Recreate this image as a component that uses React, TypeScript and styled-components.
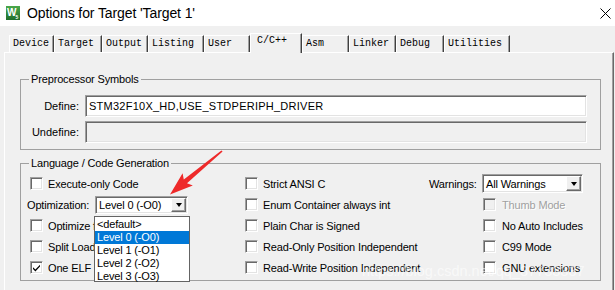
import React from "react";
import styled, { createGlobalStyle } from "styled-components";

const GlobalStyle = createGlobalStyle`
  html, body { margin: 0; padding: 0; background: #f0f0f0; }
  body {
    font-family: "Liberation Sans", Arial, sans-serif;
    font-size: 11px;
    letter-spacing: -0.15px;
    color: #000;
  }
  * { box-sizing: border-box; }
`;

// data
const tabs = [
  { name: "Device", w: 45 },
  { name: "Target", w: 48 },
  { name: "Output", w: 46 },
  { name: "Listing", w: 56 },
  { name: "User", w: 46 },
  { name: "C/C++", w: 52, active: true },
  { name: "Asm", w: 47 },
  { name: "Linker", w: 47 },
  { name: "Debug", w: 48 },
  { name: "Utilities", w: 66 },
];

const levels = ["<default>", "Level 0 (-O0)", "Level 1 (-O1)", "Level 2 (-O2)", "Level 3 (-O3)"];

const CheckMark = () => (
  <svg width="9" height="9" viewBox="0 0 9 9">
    <path d="M1 4.2 L3.4 6.6 L8 1.8 L8 3.6 L3.4 8.4 L1 6 Z" fill="#000" />
  </svg>
);

const Check: React.FC<{ checked?: boolean; disabled?: boolean; label: string; clip?: number }> = ({
  checked,
  disabled,
  label,
  clip,
}) => (
  <>
    <Box $disabled={disabled}>{checked && <CheckMark />}</Box>
    <Label $disabled={disabled} $clip={clip}>
      {label}
    </Label>
  </>
);

const Combo: React.FC<{ value: string; w: number; h: number; children?: React.ReactNode }> = ({
  value,
  w,
  h,
  children,
}) => (
  <ComboBox $w={w} $h={h}>
    <ComboText>{value}</ComboText>
    <ComboButton>
      <Arrow />
    </ComboButton>
    {children}
  </ComboBox>
);

export default function App() {
  return (
    <>
      <GlobalStyle />
      <Window>
        <TitleBar>
          <svg width="14" height="14" viewBox="0 0 14 14">
            <defs>
              <linearGradient id="kg" x1="0" y1="0" x2="0" y2="1">
                <stop offset="0" stopColor="#4aa84a" />
                <stop offset="1" stopColor="#1f6e2c" />
              </linearGradient>
            </defs>
            <rect width="14" height="14" fill="url(#kg)" />
            <text x="1" y="10" fontSize="10" fontWeight="bold" fill="#fff" fontFamily="Liberation Sans">
              W
            </text>
            <text x="9.5" y="13" fontSize="5" fontWeight="bold" fill="#fff" fontFamily="Liberation Sans">
              5
            </text>
          </svg>
          <TitleText>Options for Target 'Target 1'</TitleText>
          <svg width="11" height="11" viewBox="0 0 11 11">
            <path d="M0.5 0.5 L10.5 10.5 M10.5 0.5 L0.5 10.5" stroke="#000" strokeWidth="1" />
          </svg>
        </TitleBar>

        <TabStrip>
          {tabs.map((t) => (
            <Tab key={t.name} $w={t.w} $active={t.active}>
              {t.name}
            </Tab>
          ))}
        </TabStrip>

        <Panel>
          <Group>
            <Legend>Preprocessor Symbols</Legend>
            <SymbolGrid>
              <FieldLabel>Define:</FieldLabel>
              <TextInput>STM32F10X_HD,USE_STDPERIPH_DRIVER</TextInput>
              <FieldLabel>Undefine:</FieldLabel>
              <TextInput $disabled />
            </SymbolGrid>
          </Group>

          <Group $gap>
            <Legend>Language / Code Generation</Legend>
            <Columns>
              <Column $w={218}>
                <Row $indent={3}>
                  <Check label="Execute-only Code" />
                </Row>
                <Row $indent={0} $gap={8}>
                  <OptLabel>Optimization:</OptLabel>
                  <Combo value="Level 0 (-O0)" w={93} h={18}>
                    <DropList>
                      {levels.map((l, i) => (
                        <DropItem key={l} $selected={i === 1}>
                          {l}
                        </DropItem>
                      ))}
                    </DropList>
                  </Combo>
                </Row>
                <Row $indent={3}>
                  <Check label="Optimize for Time" clip={136} />
                </Row>
                <Row $indent={3}>
                  <Check label="Split Load and Store Multiple" clip={136} />
                </Row>
                <Row $indent={3}>
                  <Check checked label="One ELF Section per Function" clip={136} />
                </Row>
              </Column>

              <Column $w={184}>
                <Row>
                  <Check label="Strict ANSI C" />
                </Row>
                <Row>
                  <Check label="Enum Container always int" />
                </Row>
                <Row>
                  <Check label="Plain Char is Signed" />
                </Row>
                <Row>
                  <Check label="Read-Only Position Independent" />
                </Row>
                <Row>
                  <Check label="Read-Write Position Independent" />
                </Row>
              </Column>

              <Column>
                <Row>
                  <WarnLabel>Warnings:</WarnLabel>
                  <Combo value="All Warnings" w={101} h={19} />
                </Row>
                <Row $indent={54} $gap={6}>
                  <Check disabled label="Thumb Mode" />
                </Row>
                <Row $indent={54} $gap={6}>
                  <Check label="No Auto Includes" />
                </Row>
                <Row $indent={54} $gap={6}>
                  <Check label="C99 Mode" />
                </Row>
                <Row $indent={54} $gap={6}>
                  <Check label="GNU extensions" />
                </Row>
              </Column>
            </Columns>
          </Group>
        </Panel>

        <Watermark>https://blog.csdn.net/qq_37733337</Watermark>

        <Annotation width="615" height="290" viewBox="0 0 615 290">
          <polygon
            points="222.6,151.6 187,183.2 192.8,185.6 170,194.5 182.6,173.2 183.8,179.4 221.4,150.4"
            fill="#ee2a2a"
          />
        </Annotation>
      </Window>
    </>
  );
}

const Window = styled.div`
  position: relative;
  width: 615px;
  height: 290px;
  overflow: hidden;
  background: #f0f0f0;
  display: flex;
  flex-direction: column;
`;

const TitleBar = styled.div`
  flex: none;
  height: 26px;
  background: #fff;
  display: flex;
  align-items: center;
  padding: 0 4px 0 6px;
  font-size: 14px;
  letter-spacing: -0.1px;
`;

const TitleText = styled.span`
  flex: 1;
  margin-left: 7px;
  line-height: 20px;
`;

const TabStrip = styled.div`
  flex: none;
  display: flex;
  align-items: flex-end;
  height: 26px;
  padding-left: 9px;
`;

const Tab = styled.div<{ $w: number; $active?: boolean }>`
  position: relative;
  z-index: ${(p) => (p.$active ? 1 : 0)};
  width: ${(p) => p.$w}px;
  height: ${(p) => (p.$active ? 20 : 17)}px;
  margin-bottom: ${(p) => (p.$active ? -1 : 0)}px;
  padding: ${(p) => (p.$active ? "1px 0 0 6px" : "2px 0 0 3px")};
  background: #f0f0f0;
  border-top: 1px solid #fff;
  border-left: 1px solid #fff;
  border-right: 1px solid #404040;
  box-shadow: inset -1px 0 0 #a0a0a0;
  font-family: "Liberation Mono", "Courier New", monospace;
  font-size: 10px;
  line-height: 12px;
  letter-spacing: 0;
  white-space: nowrap;
`;

const Panel = styled.div`
  flex: 1;
  width: 610px;
  margin-left: 4px;
  padding: 20px 0 0 15px;
  border-top: 1px solid #fff;
  border-left: 1px solid #fff;
  border-right: 1px solid #696969;
  box-shadow: inset -1px 0 0 #a0a0a0;
`;

const Group = styled.fieldset<{ $gap?: boolean }>`
  width: 581px;
  margin: ${(p) => (p.$gap ? 7 : 0)}px 0 0 0;
  padding: 0;
  border: 1px solid #a0a0a0;
  min-width: 0;
`;

const Legend = styled.legend`
  margin-left: 8px;
  padding: 0 2px;
  font-size: 11px;
  line-height: 13px;
`;

const SymbolGrid = styled.div`
  display: grid;
  grid-template-columns: 58px 502px;
  grid-auto-rows: 22px;
  column-gap: 6px;
  row-gap: 4px;
  align-items: center;
  padding: 9px 0 6px 0;
`;

const FieldLabel = styled.span`
  text-align: right;
  white-space: nowrap;
  letter-spacing: 0;
`;

const sunken = `
  border: 1px solid;
  border-color: #a0a0a0 #fff #fff #a0a0a0;
  box-shadow: inset 1px 1px 0 #696969, inset -1px -1px 0 #e3e3e3;
`;

const TextInput = styled.div<{ $disabled?: boolean }>`
  height: 22px;
  ${sunken}
  background: ${(p) => (p.$disabled ? "#f0f0f0" : "#fff")};
  padding: 0 3px;
  line-height: 20px;
  letter-spacing: 0.25px;
  white-space: nowrap;
  overflow: hidden;
`;

const Columns = styled.div`
  display: flex;
  padding: 3px 0 2px 6px;
`;

const Column = styled.div<{ $w?: number }>`
  display: flex;
  flex-direction: column;
  ${(p) => (p.$w ? `width: ${p.$w}px; flex: none;` : "flex: 1;")}
`;

const Row = styled.div<{ $indent?: number; $gap?: number }>`
  display: flex;
  align-items: center;
  height: 21px;
  gap: ${(p) => p.$gap ?? 5}px;
  padding-left: ${(p) => p.$indent ?? 0}px;
  white-space: nowrap;
`;

const Box = styled.span<{ $disabled?: boolean }>`
  flex: none;
  width: 13px;
  height: 13px;
  ${sunken}
  background: ${(p) => (p.$disabled ? "#f0f0f0" : "#fff")};
  display: flex;
  align-items: center;
  justify-content: center;
`;

const Label = styled.span<{ $disabled?: boolean; $clip?: number }>`
  color: ${(p) => (p.$disabled ? "#a0a0a0" : "#000")};
  text-shadow: ${(p) => (p.$disabled ? "1px 1px 0 #fff" : "none")};
  ${(p) => (p.$clip ? `max-width: ${p.$clip}px; overflow: hidden;` : "")}
`;

const OptLabel = styled.span`
  width: 60px;
`;

const WarnLabel = styled.span`
  width: 48px;
`;

const ComboBox = styled.div<{ $w: number; $h: number }>`
  position: relative;
  flex: none;
  display: flex;
  width: ${(p) => p.$w}px;
  height: ${(p) => p.$h}px;
  ${sunken}
  background: #fff;
`;

const ComboText = styled.span`
  flex: 1;
  padding-left: 3px;
  align-self: center;
`;

const ComboButton = styled.span`
  flex: none;
  width: 15px;
  margin: 1px;
  background: #f0f0f0;
  border: 1px solid;
  border-color: #fff #696969 #696969 #fff;
  box-shadow: inset -1px -1px 0 #a0a0a0;
  display: flex;
  align-items: center;
  justify-content: center;
`;

const Arrow = styled.span`
  width: 0;
  height: 0;
  border-left: 3.5px solid transparent;
  border-right: 3.5px solid transparent;
  border-top: 4px solid #000;
`;

const DropList = styled.div`
  position: absolute;
  z-index: 2;
  top: 19px;
  left: -2px;
  width: 96px;
  height: 66px;
  background: #fff;
  border: 1px solid #646464;
  padding-top: 1px;
`;

const DropItem = styled.div<{ $selected?: boolean }>`
  height: 13px;
  line-height: 13px;
  padding-left: 2px;
  background: ${(p) => (p.$selected ? "#0078d7" : "transparent")};
  color: ${(p) => (p.$selected ? "#fff" : "#000")};
`;

const Watermark = styled.div`
  position: absolute;
  left: 362px;
  top: 263px;
  font-size: 14.5px;
  letter-spacing: 0;
  color: rgba(255, 255, 255, 0.6);
  white-space: nowrap;
  pointer-events: none;
`;

const Annotation = styled.svg`
  position: absolute;
  left: 0;
  top: 0;
  pointer-events: none;
`;
